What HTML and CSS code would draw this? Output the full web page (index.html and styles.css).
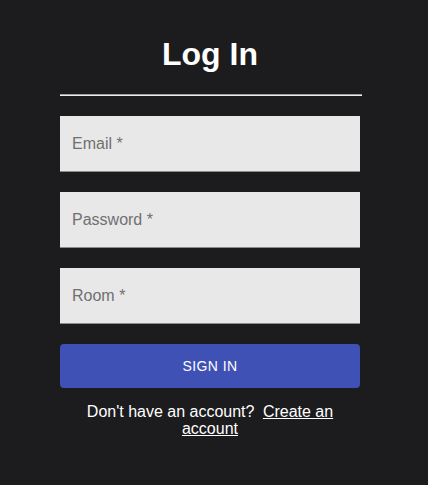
FILE: index.html
```html
<!DOCTYPE html>
<html lang="en">
<head>
<meta charset="utf-8">
<title>Log In</title>
<link rel="stylesheet" href="styles.css">
</head>
<body>
<div class="page">
  <form class="card">
    <h1 class="title">Log In</h1>
    <div class="rule"></div>
    <div class="fields">
      <div class="field"><span class="label">Email *</span></div>
      <div class="field"><span class="label">Password *</span></div>
      <div class="field"><span class="label">Room *</span></div>
    </div>
    <button type="button" class="btn">SIGN IN</button>
    <p class="footer">Don't have an account? <a href="#" class="link">Create an account</a></p>
  </form>
</div>
</body>
</html>
```
FILE: styles.css
```css
html, body {
  margin: 0;
  padding: 0;
  background: #1c1c1e;
  font-family: "Liberation Sans", Arial, sans-serif;
  color: #ffffff;
}
.page {
  width: 428px;
  height: 485px;
  padding-left: 60px;
  padding-top: 36px;
  box-sizing: border-box;
}
.card {
  width: 300px;
  display: flex;
  flex-direction: column;
  margin: 0;
}
.title {
  margin: 0;
  font-size: 32px;
  line-height: 37px;
  font-weight: 700;
  text-align: center;
}
.rule {
  width: 302px;
  height: 0;
  border-top: 1px solid #a0a0a0;
  border-bottom: 1px solid #ededed;
  margin-top: 21px;
}
.fields {
  display: flex;
  flex-direction: column;
  gap: 20px;
  margin-top: 20px;
}
.field {
  height: 56px;
  box-sizing: border-box;
  background: #e8e8e8;
  border-bottom: 1px solid #8c8c8c;
  display: flex;
  align-items: center;
  padding: 0 12px;
}
.label {
  font-size: 16px;
  color: #707070;
}
.btn {
  margin-top: 20px;
  height: 44px;
  border: none;
  border-radius: 4px;
  background: #3f51b5;
  color: #ffffff;
  font-family: "Liberation Sans", Arial, sans-serif;
  font-size: 14px;
  letter-spacing: 0.4px;
  padding: 0;
}
.footer {
  margin: 15px 0 0;
  font-size: 16px;
  line-height: 17px;
  text-align: center;
}
.link {
  color: #ffffff;
  text-decoration: underline;
  margin-left: 4px;
}
```
